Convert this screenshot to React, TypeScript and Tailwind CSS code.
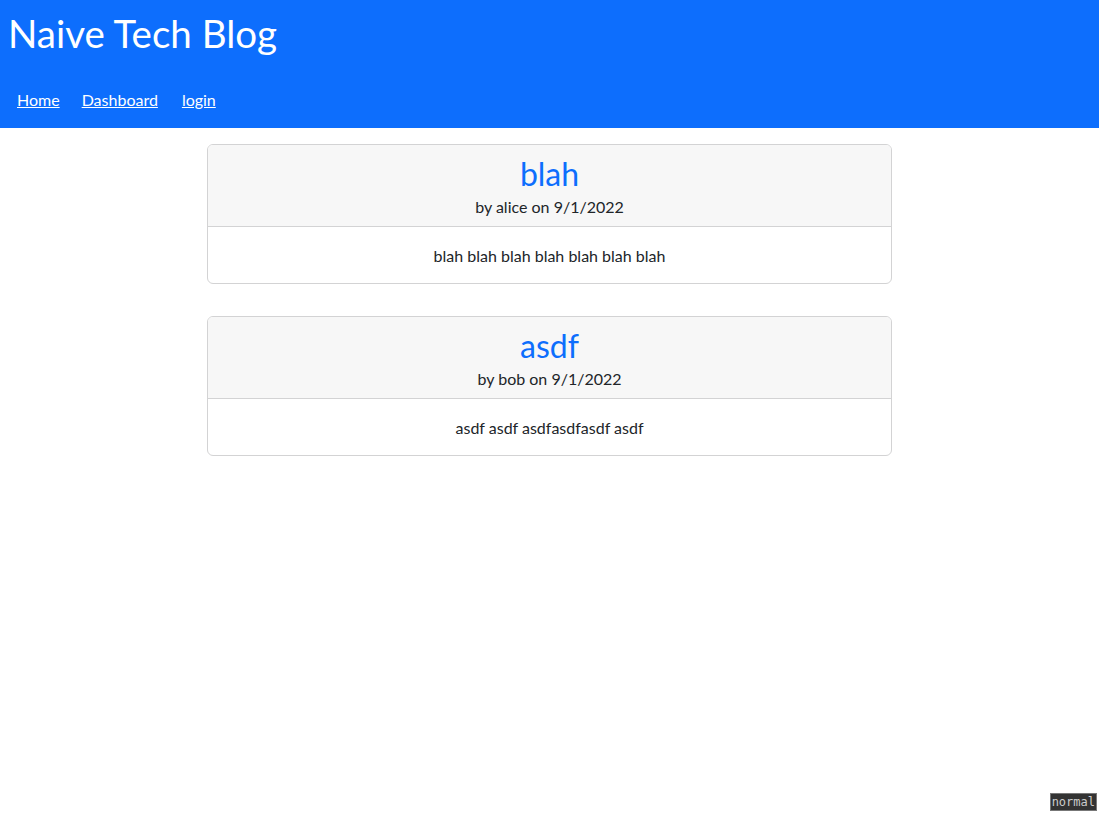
const posts = [
  { title: "blah", author: "alice", date: "9/1/2022", body: "blah blah blah blah blah blah blah" },
  { title: "asdf", author: "bob", date: "9/1/2022", body: "asdf asdf asdfasdfasdf asdf" },
];

const App = () => {
  return (
    <div className="min-h-screen bg-white text-[#212529] font-['Lato',sans-serif]">
      <header className="bg-[#0d6efd] text-white h-[128px] flex flex-col">
        <h1 className="text-[38.5px] leading-[48px] pl-2 pt-[9px]">Naive Tech Blog</h1>
        <nav className="flex mt-[23px]">
          <a href="#" className="px-4 py-2 ml-[1px] underline leading-6">Home</a>
          <a href="#" className="px-4 py-2 -ml-[10px] underline leading-6">Dashboard</a>
          <a href="#" className="px-4 py-2 -ml-[8px] underline leading-6">login</a>
        </nav>
      </header>

      <main className="flex flex-col items-center gap-8 pt-4">
        {posts.map((post) => (
          <div key={post.title} className="w-[685px] border border-[#d3d3d4] rounded-md text-center overflow-hidden">
            <div className="bg-[#f7f7f7] border-b border-[#d3d3d4] pt-[10px] pb-[7px]">
              <h2 className="text-[32px] leading-[38px] mb-[2px] text-[#0d6efd]">{post.title}</h2>
              <p className="leading-6">by {post.author} on {post.date}</p>
            </div>
            <div className="pt-[17px] pb-[15px] leading-6">{post.body}</div>
          </div>
        ))}
      </main>

      <div className="fixed right-[2px] bottom-[3px] bg-[#333] border border-[#777] text-[#ccc] text-[12px] leading-[16px] px-[1px] font-['DejaVu_Sans_Mono',monospace]">
        normal
      </div>
    </div>
  );
};

export default App;
